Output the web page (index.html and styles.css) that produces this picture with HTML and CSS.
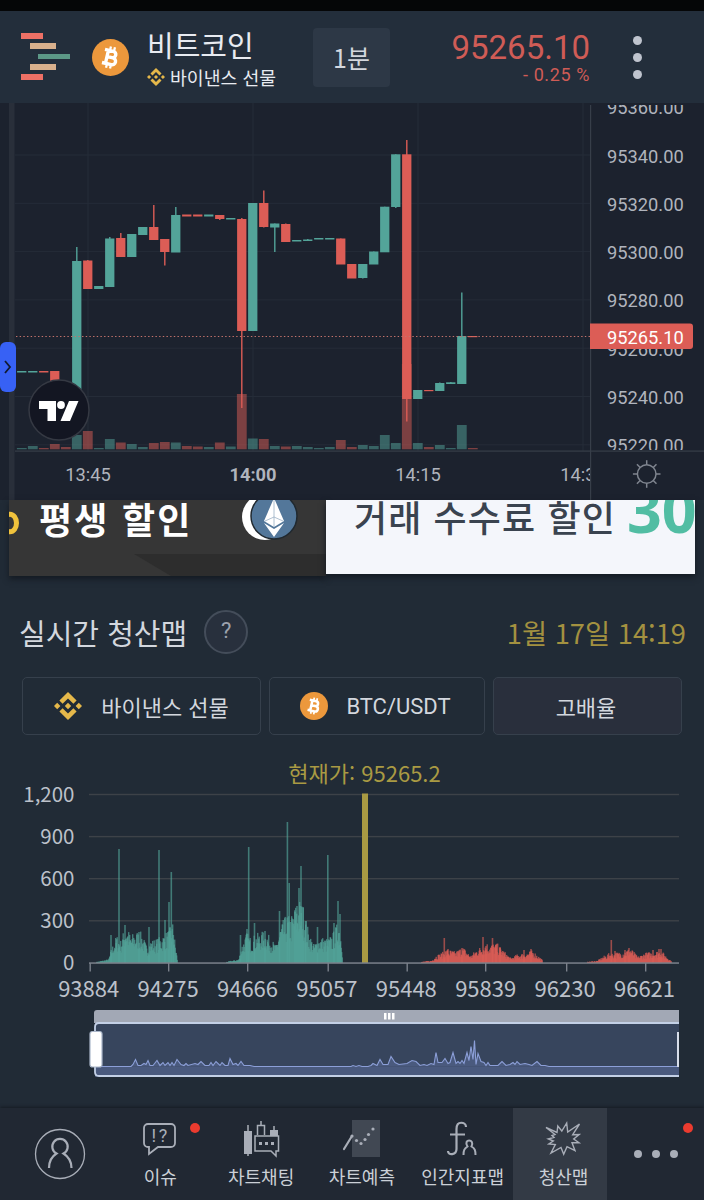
FILE: index.html
```
<!DOCTYPE html>
<html lang="ko">
<head>
    <meta charset="utf-8">
    <meta name="viewport" content="width=device-width, initial-scale=1">
    <title>비트코인</title>
    <link rel="stylesheet" href="styles.css">
</head>
<body>
<svg class="defs" width="0" height="0">
    <symbol id="btc" viewBox="0 0 36 36">
        <circle cx="18" cy="18" r="18" fill="#ec983c"/>
        <g transform="rotate(13 18 18)" fill="none" stroke="#fff">
            <path d="M14.500 11.500v13M11 11.500h8.300a3.100 3.100 0 0 1 0 6.300H14.500M19.500 17.800h.8a3.300 3.300 0 0 1 0 6.800H11" stroke-width="3.300"/>
            <path d="M16 7.400v4M20 7.400v4M16 24.600v4M20 24.600v4" stroke-width="2.200"/>
        </g>
    </symbol>
    <symbol id="bnb" viewBox="0 0 28 28">
        <path fill="#e5b84a" d="M14 0l8.600 8.600-3.200 3.200L14 6.400l-5.400 5.400-3.200-3.200zM14 28l8.600-8.600-3.200-3.200L14 21.600l-5.400-5.400-3.200 3.200zM3.200 10.800L6.400 14l-3.200 3.200L0 14zM24.800 10.800L28 14l-3.200 3.200L21.600 14zM14 10.800l3.200 3.200-3.200 3.200-3.200-3.200z"/>
    </symbol>
</svg>

<div class="statusbar"></div>

<header class="header">
    <svg class="logo" width="50" height="48" viewBox="0 0 50 48">
        <path fill="#ed7065" d="M0 0h22v6H0zM0 41h22v6H0z"/>
        <path fill="#d8b08c" d="M9 10h26v6H9zM9 31h26v6H9z"/>
        <path fill="#5c9886" d="M17 21h32v5H17z"/>
    </svg>
    <svg class="coin" width="37" height="37"><use href="#btc"/></svg>
    <div class="pair">
        <div class="pair-name">비트코인</div>
        <div class="pair-market"><svg width="18" height="18"><use href="#bnb"/></svg>바이낸스 선물</div>
    </div>
    <button class="interval">1분</button>
    <div class="price">
        <div class="price-now">95265.10</div>
        <div class="price-diff">- 0.25 %</div>
    </div>
    <div class="menu"><i></i><i></i><i></i></div>
</header>

<section class="trade">
    <svg id="candles" width="704" height="397" viewBox="0 103 704 397"></svg>
    <svg class="tv" width="62" height="62" viewBox="0 0 62 62">
        <circle cx="31" cy="31" r="30" fill="#131622" stroke="#353943" stroke-width="1.500"/>
        <path fill="#fff" d="M11 22h17v20h-8.500V30H11zM41 22h9.500L42 42h-9.500z"/>
        <circle cx="33" cy="26" r="3.900" fill="#fff"/>
    </svg>
    <div class="drawer"><svg width="8" height="14" viewBox="0 0 8 14"><path d="M1 1l5 6-5 6" fill="none" stroke="#111a30" stroke-width="1.800"/></svg></div>
</section>

<section class="banners">
    <div class="banner dark">
        <svg class="shade" width="317" height="76" viewBox="0 0 317 76">
            <path d="M125 54h192v22H162z" fill="#2d2d2d"/>
            <ellipse cx="1" cy="23" rx="6.500" ry="8.800" fill="none" stroke="#f0c23c" stroke-width="5"/>
            <ellipse cx="256" cy="17" rx="23" ry="23" fill="#fff"/>
            <circle cx="265" cy="16" r="23" fill="#53779a" stroke="#202930" stroke-width="1.500"/>
            <path d="M265-2l10 23-10 6-10-6z" fill="#fff"/>
            <path d="M255 23l10 6 10-6-10 14z" fill="#fff"/>
            <path d="M265 0v27M256 21l9-4 9 4" fill="none" stroke="#9bb0c4" stroke-width=".8"/>
        </svg>
        <span class="banner-text">평생 할인</span>
    </div>
    <div class="banner light">
        <span class="banner-text">거래 수수료 할인</span>
        <span class="banner-num">30</span>
    </div>
</section>

<main class="liq">
    <div class="liq-head">
        <h2>실시간 청산맵</h2>
        <span class="help">?</span>
        <time>1월 17일 14:19</time>
    </div>
    <div class="filters">
        <button class="market"><svg width="28" height="28"><use href="#bnb"/></svg>바이낸스 선물</button>
        <button class="symbol"><svg width="28" height="28"><use href="#btc"/></svg>BTC/USDT</button>
        <button class="on">고배율</button>
    </div>
    <svg id="liqmap" width="704" height="348" viewBox="0 750 704 348"></svg>
</main>

<nav class="nav">
    <a class="profile">
        <svg width="52" height="52" viewBox="0 0 52 52">
            <circle cx="26" cy="26" r="24.500" stroke-width="1.300"/>
            <path d="M15 40c0-7 2-11 7.500-14.500a7.700 7.700 0 1 1 7 0C35 29 37.500 33 37.500 40" stroke-width="2.200"/>
        </svg>
    </a>
    <a>
        <svg width="40" height="40" viewBox="0 0 40 40">
            <path d="M8 5h23a4 4 0 0 1 4 4v15a4 4 0 0 1-4 4H18l-9 7v-7H8a4 4 0 0 1-4-4V9a4 4 0 0 1 4-4z" stroke-width="1.800"/>
            <text class="solid" x="11.500" y="23">!?</text>
        </svg>
        이슈
        <i class="badge"></i>
    </a>
    <a>
        <svg width="40" height="40" viewBox="0 0 40 40">
            <path class="solid" d="M3 12h8v23H3zM29 11h8v6h-8z"/>
            <path d="M7 6v31M20 2v4M33 7v5M16.500 16V6.500h7V16M14 17h23.500v15H35v5l-5-5H14z" stroke-width="1.500"/>
            <path class="solid" d="M18 23h3v3h-3zM24 23h3v3h-3zM30 23h3v3h-3z"/>
        </svg>
        차트채팅
    </a>
    <a>
        <svg width="40" height="40" viewBox="0 0 40 40">
            <path d="M10 1h28v37H10z" fill="#414853" stroke="none"/>
            <path d="M2 30l8-13" stroke-width="2.200" stroke-linecap="round"/>
            <g class="solid"><circle cx="10" cy="17" r="1.600"/><circle cx="14.500" cy="21.500" r="1.600"/><circle cx="19" cy="24.500" r="1.600"/><circle cx="23" cy="20.500" r="1.600"/><circle cx="26.500" cy="15.500" r="1.600"/><circle cx="31" cy="10" r="1.600"/></g>
        </svg>
        차트예측
    </a>
    <a>
        <svg width="40" height="40" viewBox="0 0 40 40">
            <path d="M23 8c0-5-9.500-7-9.500 2v20c0 6-8.500 7-8.500 2M7 15.500h15" stroke-width="2.200"/>
            <path d="M20.500 36c0-5 1-6.500 4-8.500-5-8 8-8 4 0 3.500 2 4 4 4 8.500" stroke-width="2"/>
        </svg>
        인간지표맵
    </a>
    <a class="on">
        <svg width="40" height="40" viewBox="0 0 40 40">
            <path d="M2 8.500l11 5 .8-6.500 4 5L22.700 4l1 9L35.500 5l-6.800 10.700 6.500-.2-5.500 4.500 5.300 3.700h-7l3 8-8-4-3.300 7.500L17 28.500 7 34l4.300-8.500-6.500-.5 4.500-3-5-2 5.700-1.500-2-2 3-1z" stroke-width="1.400"/>
        </svg>
        청산맵
    </a>
    <a class="more"><b></b><b></b><b></b><i class="badge"></i></a>
</nav>
<script src="script.js"></script>
</body>
</html>
```
FILE: styles.css
```
* {
    box-sizing: border-box;
}
body {
    margin: 0;
    width: 704px;
    height: 1200px;
    overflow: hidden;
    display: flex;
    flex-direction: column;
    background: #212b36;
    color: #d3d7de;
    font-family: "Noto Sans CJK KR", sans-serif;
}
svg {
    display: block;
    flex: none;
}
.defs {
    position: absolute;
}
button {
    font: inherit;
    color: inherit;
    padding: 0;
}
.statusbar {
    height: 11px;
    background: #050607;
}

/* header */
.header {
    height: 92px;
    display: flex;
    align-items: center;
    padding: 0 62px 0 21px;
    background: #232e3b;
}
.coin {
    margin-left: 21px;
}
.pair {
    width: 166px;
    margin-left: 18px;
    padding-top: 4px;
    color: #e8ebf1;
}
.pair-name {
    font-size: 29px;
    line-height: 36px;
}
.pair-market {
    display: flex;
    align-items: center;
    gap: 5px;
    font-size: 18.300px;
    line-height: 30px;
}
.interval {
    width: 77px;
    height: 59px;
    border: 0;
    border-radius: 4px;
    background: #2d3846;
    font-size: 25px;
}
.price {
    width: 200px;
    text-align: right;
    color: #cf5c56;
    font-family: Roboto, sans-serif;
}
.price-now {
    font-size: 33px;
    line-height: 35px;
}
.price-diff {
    font-size: 18px;
    line-height: 19px;
    letter-spacing: .6px;
}
.menu {
    margin-left: auto;
    display: flex;
    flex-direction: column;
    gap: 8px;
}
.menu i {
    width: 9px;
    height: 9px;
    border-radius: 50%;
    background: #bfc4ce;
}

/* candle chart */
.trade {
    position: relative;
    height: 397px;
    background: #1c222e;
}
.trade text {
    font: 18.300px Roboto, sans-serif;
    fill: #b0b4bd;
}
.trade .now {
    fill: #fff;
}
.trade .hour {
    font-weight: bold;
}
.tv {
    position: absolute;
    left: 28px;
    top: 276px;
}
.drawer {
    position: absolute;
    left: 0;
    top: 239px;
    width: 16px;
    height: 50px;
    border-radius: 6px;
    background: #3761f5;
    display: flex;
    align-items: center;
    justify-content: center;
}

/* banners */
.banners {
    height: 76px;
    display: flex;
    align-items: flex-start;
    padding: 0 9px;
}
.banner {
    position: relative;
    overflow: hidden;
    white-space: nowrap;
    font-size: 36px;
    line-height: 36px;
}
.dark {
    width: 317px;
    height: 76px;
    padding-left: 30px;
    background: #363636;
    color: #fff;
    font-weight: bold;
    letter-spacing: 2.200px;
    box-shadow: 0 3px 6px #141a22;
}
.shade {
    position: absolute;
    left: 0;
    top: 0;
}
.dark .banner-text {
    position: relative;
}
.light {
    width: 369px;
    height: 74px;
    padding-left: 28px;
    display: flex;
    gap: 11px;
    background: #f4f6fb;
    color: #3a434f;
    font-weight: 500;
    letter-spacing: 1.100px;
    line-height: 33px;
    box-shadow: 0 3px 6px #141a22;
}
.banner-num {
    font: bold 61px/19px "Noto Sans", sans-serif;
    letter-spacing: 0;
    color: #51bda3;
}

/* liquidation map */
.liq-head {
    height: 102px;
    padding: 10px 18px 0 19px;
    display: flex;
    align-items: center;
}
.liq-head h2 {
    margin: 0;
    font-size: 29px;
    font-weight: normal;
}
.help {
    width: 44px;
    height: 44px;
    margin-left: 17px;
    border: 2px solid #444d5a;
    border-radius: 50%;
    background: #28303d;
    font: 22px/38px Roboto, sans-serif;
    text-align: center;
    color: #9ca2ad;
}
.liq-head time {
    margin-left: auto;
    font-size: 27.300px;
    color: #a39140;
}
.filters {
    display: grid;
    grid-template-columns: 239px 216px 189px;
    gap: 8px;
    height: 72px;
    padding-left: 22px;
}
.filters button {
    height: 58px;
    margin-top: -1px;
    padding-right: 3px;
    display: flex;
    align-items: center;
    justify-content: center;
    gap: 18px;
    border: 1.500px solid #36404c;
    border-radius: 5px;
    background: none;
    font-size: 22px;
}
.filters .market {
    gap: 19px;
    padding: 0;
}
.filters .symbol {
    font-family: Roboto, sans-serif;
}
.filters .on {
    background: #292f3c;
}
#liqmap text {
    font-size: 22px;
    fill: #bcc1ca;
}
#liqmap .volume {
    font-size: 20.500px;
}
#liqmap .current {
    fill: #a99a43;
}

/* bottom nav */
.nav {
    flex: none;
    margin-top: auto;
    height: 92px;
    display: grid;
    grid-template-columns: 110px repeat(4, 100.750px) 94px 97px;
    background: #212833;
    box-shadow: 0 -1px 3px #151b23;
}
.nav a {
    position: relative;
    display: flex;
    flex-direction: column;
    align-items: center;
    padding-top: 11px;
    font-size: 18px;
    line-height: 34px;
    color: #cbd0d7;
}
.nav svg {
    fill: none;
    stroke: #a9aeb8;
}
.nav .solid {
    fill: #a9aeb8;
    stroke: none;
}
.nav text {
    font: 18px Roboto, sans-serif;
    letter-spacing: 2.500px;
}
.nav .on {
    padding-left: 7px;
    background: #333a45;
}
.nav .profile {
    padding: 20px 0 0 10px;
}
.nav .more {
    flex-direction: row;
    justify-content: center;
    gap: 10px;
    padding: 0;
}
.more b {
    width: 8px;
    height: 8px;
    border-radius: 50%;
    background: #a9aeb8;
}
.badge {
    position: absolute;
    right: 11px;
    top: 15px;
    width: 10px;
    height: 10px;
    border-radius: 50%;
    background: #eb3b2f;
}
```
FILE: script.js
```
var UP = '#53a499', DOWN = '#dc5d56';

function rect(x, y, w, h, fill, extra) {
    return '<rect x="' + x + '" y="' + y + '" width="' + w + '" height="' + h + '" fill="' + fill + '" ' + (extra || '') + '/>';
}
function text(x, y, str, anchor, cls) {
    return '<text x="' + x + '" y="' + y + '" text-anchor="' + (anchor || 'start') + '" class="' + (cls || '') + '">' + str + '</text>';
}

// [up, high, top, bottom, low, volume top], one candle per minute from 13:39
var candles = [
    [1,371,371,372.5,372,448],[1,371,371,372.5,372,446],[0,371,371,372.5,372,448],[0,371,371,385,385,444],
    [0,385,385,400,400,447],[1,247,261,400,400,435],[0,260,260.5,289,289,431],[1,286,286,289,289,448],
    [1,237,238.5,287,287,439],[0,233,238,257,257,442.5],[1,234,234,257,257,444],[1,227,227,235,235,447],
    [0,205,227,240,240,443],[0,239,239,252,265.5,442],[1,207,215,252.5,252,442.5],[0,215,214.5,216.5,216,446],
    [0,215,214.5,216.5,216,446.5],[1,215,214.5,216.5,216,447],[0,215,215,219,220,442.5],[1,218,218,219.5,219,446.5],
    [0,218,219,331,408,394],[1,203,203,331,331,438.5],[0,190.5,203,227,227.5,439],[1,223.5,223.5,227.5,252,446],
    [0,223.5,224,242,242,446.5],[1,240,240,241.5,241,446],[1,239,239.5,241,241,447],[1,238,238,239.5,239,448],
    [1,238,238,239.5,239,447],[0,238.5,238.5,264.5,264,440],[0,264,264,278.5,278,447],[1,264,264,278,278.5,445],
    [1,251.5,251.5,264.5,264,446],[1,206.7,206.7,252.3,252,435],[1,154.3,154.3,207,208,443],[0,140,154.3,399,421.5,364],
    [1,390,390,399,399,443],[0,390,390,391.2,391,447],[1,382.5,383,391,391,445],[1,382,382.3,384,384,448],
    [1,292.5,336,384,384,425],[0,336,336,337.2,337,448]
];

function drawCandles() {
    var s = rect(9, 103, 5.5, 397, '#292f3a');
    var grid = '#252c38';
    for (var i = 0; i < 7; i++) s += rect(15, 154.5 + i * 48.3, 576, 1, grid);
    [88, 253, 418, 583].forEach(function (x) { s += rect(x - .5, 103, 1, 348, grid); });
    candles.forEach(function (c, i) {
        var x = 21.8 + i * 11, color = c[0] ? UP : DOWN;
        s += rect(x - 4.9, c[5], 9.8, 449.3 - c[5], color, 'opacity=".5"');
        s += rect(x - .7, c[1], 1.4, c[4] - c[1], color);
        s += rect(x - 4.7, c[2], 9.3, c[3] - c[2], color);
    });
    s += '<path d="M16 336.500H590" stroke="#c4736c" stroke-width="1.200" stroke-dasharray="1.400 2.270"/>';
    s += rect(15, 450.500, 689, 1.2, '#373e49') + rect(590, 105, 1.2, 395, '#373e49');
    // price scale
    s += '<clipPath id="scale"><path d="M590 105h114v345H590z"/></clipPath><g clip-path="url(#scale)">';
    for (i = 0; i < 8; i++) s += text(607, 114.2 + i * 48.3, (95360 - i * 20) + '.00');
    s += '</g><path d="M590 323.500h100a3 3 0 0 1 3 3v19.500a3 3 0 0 1-3 3H590z" fill="#dc5d56"/>' + text(607, 343.500, '95265.10', 'start', 'now');
    // time scale
    s += '<clipPath id="times"><path d="M15 452h575v48H15z"/></clipPath><g clip-path="url(#times)">';
    s += text(88, 480.5, '13:45', 'middle') + text(253, 480.5, '14:00', 'middle', 'hour') + text(418, 480.5, '14:15', 'middle') + text(583, 480.5, '14:30', 'middle') + '</g>';
    s += '<g fill="none" stroke="#7f858f" stroke-width="1.500"><circle cx="646.700" cy="474" r="9.300"/>';
    for (i = 0; i < 8; i++) s += '<path d="M646.700 464.700v-4.500" transform="rotate(' + i * 45 + ' 646.700 474)"/>';
    s += '</g>';
    document.getElementById('candles').innerHTML = s;
}

// cluster outlines, [x, height]
var longs = [
    [[96,1],[108,3],[111,12],[116,22],[120,18],[125,30],[130,22],[136,25],[141,24],[146,13],[150,18],[156,19],[162,22],[168,26],[172,32],[175,13],[177,1]],
    [[226,1],[238,3],[241,14],[246,24],[250,20],[256,23],[264,25],[270,20],[275,14],[280,30],[286,38],[290,36],[295,46],[299,50],[303,44],[308,25],[313,15],[319,21],[327,19],[332,23],[338,34],[341,20],[342,1]]
];
var longSpikes = [[111,28],[119,114],[125,38],[139,31],[149,36],[159,113],[165,43],[169,61],[171.300,91],[173.300,28],[240.500,28],[247,34],[248.700,116],[254.500,40],[265,32],[279.500,52],[287.400,141],[289.200,80],[295,51],[297,57],[299,75],[301,97],[303,56],[305.500,42],[317.500,36],[327.800,108],[334,40],[338,62],[340,49]];
var shorts = [
    [[421,1],[431,2],[435,6],[441,8],[446,11],[455,9],[462,13],[470,6],[476,11],[486,16],[497,15],[504,9],[510,4],[517,7],[525,8],[532,10],[540,4],[542,2]],
    [[587,1],[597,2],[602,5],[609,8],[613,8],[622,9],[630,12],[637,5],[644,8],[652,9],[660,10],[668,4],[671,1]]
];
var shortSpikes = [[444.300,25],[448,14],[462,15],[483,26],[486,17],[492.500,25],[496,18],[500,15],[524,13],[531,14],[611.300,23],[615,12],[625,13],[629,15],[653,13],[659,14],[661,14]];

var seed = 7;
function rnd() {
    seed = (seed * 16807) % 2147483647;
    return seed / 2147483647;
}
function bars(clusters, spikes, color) {
    var s = '';
    clusters.forEach(function (pts) {
        for (var i = 1; i < pts.length; i++) {
            var a = pts[i - 1], b = pts[i];
            for (var x = a[0]; x < b[0]; x += .5) {
                var h = a[1] + (b[1] - a[1]) * (x - a[0]) / (b[0] - a[0]);
                h = Math.max(1, h * (.5 + rnd() * .8));
                s += rect(x.toFixed(2), (963 - h).toFixed(1), 1.4, h.toFixed(1), color, 'opacity=".7"');
            }
        }
    });
    spikes.forEach(function (p) { s += rect(p[0] - .8, 963 - p[1], 1.6, p[1], color, 'opacity=".65"'); });
    return s;
}

function drawLiqMap() {
    var s = '';
    ['1,200', '900', '600', '300', '0'].forEach(function (t, i) {
        var y = 794.5 + i * 42.1;
        if (i < 4) s += rect(89, y - .7, 590, 1.4, '#3d4248');
        s += text(74.5, y + 7.4, t, 'end', 'volume');
    });
    s += bars(longs, longSpikes, UP) + bars(shorts, shortSpikes, DOWN);
    s += rect(362, 793.5, 6, 169.5, '#a99a43') + rect(89, 962.3, 590, 1.5, '#7b818b');
    ['93884', '94275', '94666', '95057', '95448', '95839', '96230', '96621'].forEach(function (t, i) {
        s += rect([89.5, 168, 247, 327.5, 406.5, 485, 566, 645][i], 963, 1.4, 8.5, '#7b818b');
        s += text(88.7 + i * 79.4, 997, t, 'middle');
    });
    s += text(364.5, 782, '현재가: 95265.2', 'middle', 'current');
    drawZoom(s);
}

function drawZoom(s) {
    s += '<path d="M94 1022v-9a3 3 0 0 1 3-3h582v13H94z" fill="#a2a8b5"/>';
    s += rect(95, 1023, 584, 54, '#37455d') + rect(95, 1066.5, 584, 10, '#4a5a7e');
    s += '<path d="M679 1023H99q-4 0-4 4V1072q0 4 4 4H679" fill="none" stroke="#c3d0e6" stroke-width="1.800"/>';
    s += rect(384, 1013, 2.5, 6.5, '#fff') + rect(388, 1013, 2.5, 6.5, '#fff') + rect(392, 1013, 2.5, 6.5, '#fff');
    var pts = [[102,0],[131,0],[133,2],[135.500,7],[138,1],[141,1],[144,3],[146,2],[148,6],[150,1],[153,1],[157,6],[160,1],[163,4],[165,1],[168,4],[170,1],[172,4],[174,1],[177,7],[181,2],[184,1],[186,3],[188,1],[195,3],[198,2],[201,5],[205,1],[209,1],[211,4],[213,1],[216,5],[220,1],[222,4],[225,1],[228,1],[230,8],[233,2],[236,3],[238,1],[241,5],[244,1],[250,1],[254,0],[351,0],[353,1],[356,0],[359,1],[362,0],[368,0],[371,1],[373,3],[377,1],[380,7],[383,2],[388,2],[391,10],[395,4],[399,2],[407,3],[412,6],[416,5],[420,1],[424,2],[427,1],[431,3],[434,2],[436,14],[438,4],[442,4],[445,8],[448,3],[450,4],[453,14],[456,3],[458,5],[460,3],[462,6],[464,3],[467,14],[469,6],[471,20],[473,7],[474.500,26],[476,2],[478,13],[481,5],[484,4],[486,1],[488,4],[490,1],[498,1],[502,5],[506,1],[510,2],[513,4],[515,2],[517,5],[520,2],[525,3],[529,2],[532,1],[537,5],[541,1],[545,1],[549,0],[679,0]];
    var d = pts.map(function (p) { return p[0] + ' ' + (1066.5 - p[1]); }).join('L');
    s += '<path d="M' + d + '" fill="#4a5a7e" stroke="#8c9fd8" stroke-width="1.100"/>';
    s += '<rect x="90" y="1031.500" width="12" height="35.500" rx="2.500" fill="#fff" stroke="#abb7ca" stroke-width="1.200"/>';
    s += rect(677, 1032, 2, 35, '#d8deea');
    document.getElementById('liqmap').innerHTML = s;
}

drawCandles();
drawLiqMap();
```
